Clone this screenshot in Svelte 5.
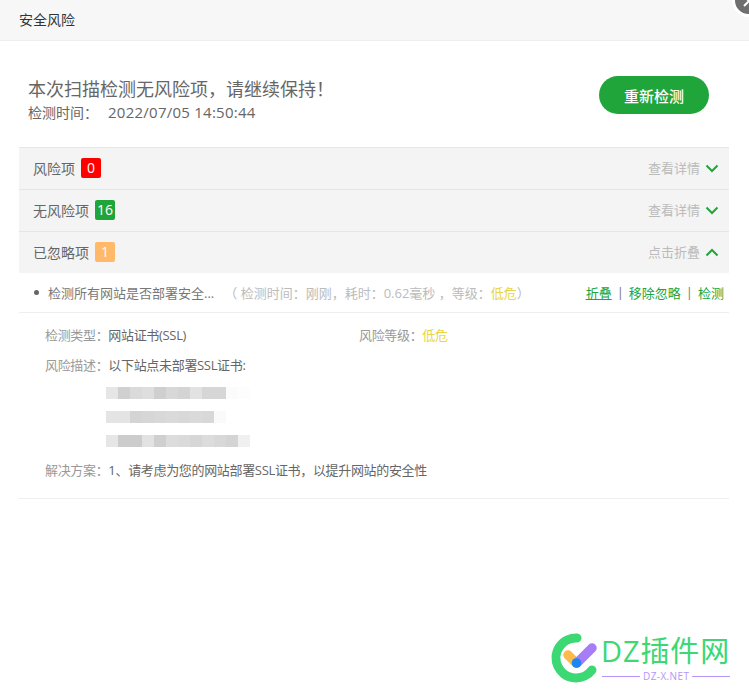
<script lang="ts">
	const rows = [
		{ label: '风险项', count: '0', tone: 'red', action: '查看详情', open: false },
		{ label: '无风险项', count: '16', tone: 'green', action: '查看详情', open: false },
		{ label: '已忽略项', count: '1', tone: 'orange', action: '点击折叠', open: true }
	];

	// mosaic over the hidden site addresses, one list per line of text
	const mosaics = [
		['#e6e6e6', '#d0d0d0', '#dadada', '#dedede', '#cfcfcf', '#d8d8d8', '#d4d4d4', '#e2e2e2', '#d6d6d6', '#d6d6d6', '#fbfbfb', '#fdfdfd'],
		['#e4e4e4', '#e4e4e4', '#d4d4d4', '#d6d6d6', '#d8d8d8', '#dadada', '#d8d8d8', '#dadada', '#d8d8d8', '#fafafa'],
		['#e6e6e6', '#cccccc', '#cccccc', '#e2e2e2', '#cfcfcf', '#dcdcdc', '#dadada', '#d6d6d6', '#dcdcdc', '#d8d8d8', '#d4d4d4', '#f0f0f0']
	];
</script>

<div class="dialog">
	<header class="title-bar">安全风险</header>
	<button class="close" aria-label="关闭">
		<svg width="12" height="12" viewBox="0 0 12 12" fill="none" stroke="#fff" stroke-width="2">
			<path d="M1 1l10 10M11 1L1 11" />
		</svg>
	</button>

	<section class="summary">
		<div class="summary-text">
			<h1>本次扫描检测无风险项，请继续保持！</h1>
			<p><span>检测时间：</span><span class="time">2022/07/05 14:50:44</span></p>
		</div>
		<button class="recheck">重新检测</button>
	</section>

	<div class="list">
		{#each rows as row}
			<div class="row">
				<span class="row-label">{row.label}</span>
				<span class="badge {row.tone}">{row.count}</span>
				<span class="row-action">{row.action}</span>
				<svg class="chevron" width="14" height="9" viewBox="0 0 14 9" fill="none" stroke="#20a53a" stroke-width="2">
					{#if row.open}
						<path d="M1.5 7.5L7 2l5.5 5.5" />
					{:else}
						<path d="M1.5 1.5L7 7l5.5-5.5" />
					{/if}
				</svg>
			</div>
		{/each}

		<div class="item">
			<i class="dot"></i>
			<span class="item-name">检测所有网站是否部署安全...</span>
			<span class="item-meta">（ 检测时间：刚刚，耗时：0.62毫秒 ，等级：<em>低危</em>）</span>
			<span class="item-links">
				<a href="#fold" class="current">折叠</a>
				<b>|</b>
				<a href="#ignore">移除忽略</a>
				<b>|</b>
				<a href="#check">检测</a>
			</span>
		</div>

		<div class="detail">
			<div class="detail-top">
				<div class="field type"><label>检测类型：</label>网站证书(SSL)</div>
				<div class="field"><label>风险等级：</label><em>低危</em></div>
			</div>
			<div class="field desc"><label>风险描述：</label>以下站点未部署SSL证书:</div>
			<div class="mosaics">
				{#each mosaics as line}
					<div class="mosaic">
						{#each line as color}
							<span style="background: {color}"></span>
						{/each}
					</div>
				{/each}
			</div>
			<div class="field"><label>解决方案：</label>1、请考虑为您的网站部署SSL证书，以提升网站的安全性</div>
		</div>
	</div>

	<div class="watermark">
		<svg width="52" height="54" viewBox="0 0 52 54" fill="none">
			<path d="M28 5A20 20 0 1 0 43 37" stroke="#3bd873" stroke-width="9" stroke-linecap="round" />
			<path d="M19 22l8 8" stroke="#fdb94a" stroke-width="9.5" stroke-linecap="round" />
			<path d="M43 15L28 30" stroke="#a67df6" stroke-width="9.5" stroke-linecap="round" />
			<circle cx="27.5" cy="30" r="4.8" fill="#1c86f5" />
		</svg>
		<div class="mark-text">
			<div class="mark-name">DZ插件网</div>
			<div class="mark-url"><i></i><span>DZ-X.NET</span><i></i></div>
		</div>
	</div>
</div>

<style>
	:global(body) {
		margin: 0;
		background: #fff;
	}

	.dialog {
		position: relative;
		width: 749px;
		height: 699px;
		overflow: hidden;
		background: #fff;
		font-family: "Open Sans", "Noto Sans CJK SC", sans-serif;
		font-size: 13px;
		color: #666;
	}

	.title-bar {
		height: 40px;
		line-height: 40px;
		padding-left: 19px;
		background: #f7f7f7;
		border-bottom: 1px solid #eee;
		font-size: 14px;
		color: #333;
	}

	.close {
		position: absolute;
		top: -16px;
		right: -16px;
		width: 33px;
		height: 33px;
		padding: 0;
		border: 3px solid #fff;
		border-radius: 50%;
		background: #6f6f6f;
		display: flex;
		align-items: center;
		justify-content: center;
	}

	.summary {
		display: flex;
		align-items: flex-start;
		justify-content: space-between;
		height: 71px;
		padding: 35px 40px 0 28px;
	}

	.summary-text {
		margin-top: 1px;
	}

	h1 {
		margin: 0;
		font-size: 18px;
		font-weight: 400;
		line-height: 24px;
		color: #666;
	}

	.summary-text p {
		margin: 0;
		font-size: 14px;
		line-height: 22px;
		color: #666;
	}

	.time {
		margin-left: 10px;
		font-size: 15px;
		letter-spacing: 0.25px;
	}

	.recheck {
		width: 110px;
		height: 38px;
		border: 0;
		border-radius: 19px;
		background: #20a53a;
		color: #fff;
		font-family: inherit;
		font-size: 15px;
		font-weight: 500;
	}

	.list {
		margin: 0 20px 0 19px;
	}

	.row {
		display: flex;
		align-items: center;
		height: 40px;
		padding: 0 10px 1px 14px;
		background: #f4f4f4;
		border-top: 1px solid #e6e6e6;
		font-size: 14px;
	}

	.row-label {
		color: #666;
	}

	.badge {
		min-width: 20px;
		height: 20px;
		margin-left: 6px;
		border-radius: 2px;
		color: #fff;
		font-size: 14px;
		line-height: 20px;
		text-align: center;
	}

	.red { background: #f00; }
	.green { background: #20a53a; }
	.orange { background: #ffb968; }

	.row-action {
		margin-left: auto;
		margin-bottom: 2px;
		color: #bbb;
		font-size: 13px;
	}

	.chevron {
		margin-left: 5px;
	}

	.item {
		display: flex;
		align-items: center;
		height: 39px;
		padding: 0 5px 0 15px;
		border-bottom: 1px solid #eee;
	}

	.dot {
		width: 5px;
		height: 5px;
		margin-right: 9px;
		border-radius: 50%;
		background: #666;
	}

	.item-name {
		color: #777;
	}

	.item-meta {
		margin-left: 10px;
		color: #bbb;
	}

	em {
		font-style: normal;
		color: #e8d544;
	}

	.item-links {
		margin-left: auto;
		display: flex;
		gap: 5px;
	}

	.item-links a {
		color: #20a53a;
		text-decoration: none;
	}

	.item-links a.current {
		text-decoration: underline;
	}

	.item-links b {
		font-weight: 400;
		color: #777;
	}

	.detail {
		padding: 12px 0 18px 26px;
		border-bottom: 1px solid #eee;
	}

	.detail-top {
		display: flex;
	}

	.field {
		line-height: 20px;
		letter-spacing: -0.33px;
		color: #666;
	}

	.field label {
		color: #999;
	}

	.type {
		width: 314px;
	}

	.desc {
		margin-top: 10px;
	}

	.mosaics {
		display: flex;
		flex-direction: column;
		gap: 12px;
		margin: 12px 0 13px 61px;
	}

	.mosaic {
		display: flex;
	}

	.mosaic span {
		width: 12px;
		height: 12px;
	}

	.watermark {
		position: absolute;
		left: 549px;
		top: 633px;
		display: flex;
	}

	.mark-name {
		font-size: 29px;
		line-height: 36px;
		letter-spacing: 0.9px;
		color: #3bd873;
		white-space: nowrap;
	}

	.mark-url {
		display: flex;
		align-items: center;
		gap: 3px;
		font-size: 10px;
		line-height: 14px;
		letter-spacing: 0.4px;
		color: #b595f5;
		margin-left: 1px;
	}

	.mark-url i {
		width: 38px;
		height: 1px;
		background: #b595f5;
	}
</style>
